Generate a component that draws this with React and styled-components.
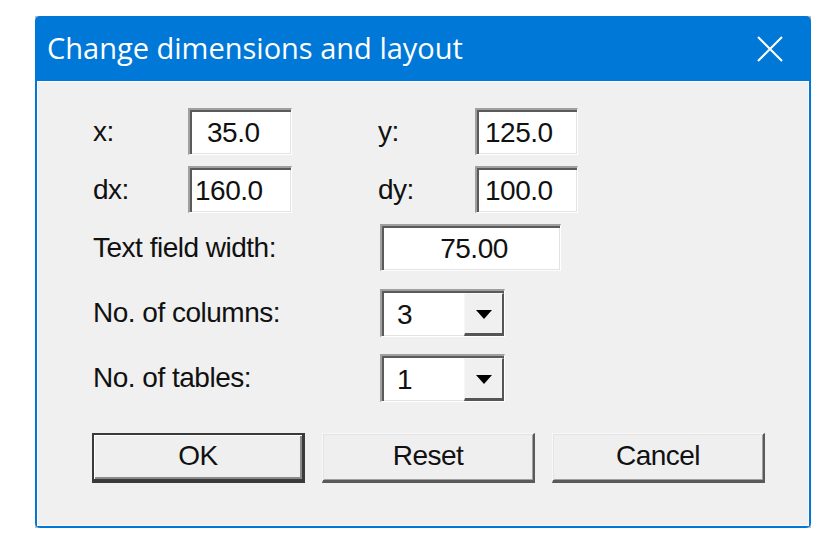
import React from "react";
import styled, { createGlobalStyle } from "styled-components";

const GlobalStyle = createGlobalStyle`
  html, body {
    margin: 0;
    padding: 0;
    background: #ffffff;
  }
`;

const Page = styled.div`
  width: 834px;
  height: 547px;
  padding: 16px 0 0 35px;
  box-sizing: border-box;
  background: #ffffff;
`;

const Frame = styled.div`
  width: 776px;
  height: 512px;
  background: #bdbdbd;
`;

const Window = styled.div`
  display: flex;
  flex-direction: column;
  width: 100%;
  height: 100%;
  box-sizing: border-box;
  padding: 0 2px 2px 2px;
  background: #0078d7;
  border-radius: 5px;
  overflow: hidden;
`;

const TitleBar = styled.div`
  display: flex;
  align-items: center;
  height: 65px;
  flex: 0 0 auto;
  padding-left: 10px;
`;

const Title = styled.div`
  flex: 1;
  color: #ffffff;
  font-family: "Segoe UI", "Open Sans", sans-serif;
  font-size: 29px;
  margin-top: -2px;
`;

const CloseButton = styled.div`
  display: flex;
  align-items: center;
  justify-content: center;
  width: 78px;
  height: 65px;
`;

const Body = styled.div`
  flex: 1;
  display: flex;
  flex-direction: column;
  background: #f0f0f0;
  box-shadow: inset 1px 1px 0 #ffffff, inset -1px -1px 0 #fbfbfb;
  padding: 27px 0 0 56px;
  font-family: "Liberation Sans", Arial, sans-serif;
  font-size: 28px;
  letter-spacing: -0.5px;
  color: #111111;
`;

const CoordRow = styled.div`
  display: grid;
  grid-template-columns: 95px 104px 86px 97px 104px;
  align-items: center;
  height: 47px;
  margin-bottom: ${(p) => p.$gap}px;
`;

const FieldRow = styled.div`
  display: grid;
  grid-template-columns: 287px auto;
  align-items: center;
  height: ${(p) => p.$height}px;
  margin-bottom: ${(p) => p.$gap}px;
`;

const Label = styled.div`
  white-space: nowrap;
`;

const Sunken = styled.div`
  position: relative;
  box-sizing: border-box;
  height: ${(p) => p.$height || 47}px;
  width: ${(p) => p.$width}px;
  background: #ffffff;
  border-style: solid;
  border-width: 2px 1px 1px 2px;
  border-color: #a0a0a0 #ffffff #ffffff #a0a0a0;
  box-shadow: inset 2px 2px 0 #5a5a5a, inset -1px -1px 0 #e3e3e3;
`;

const TextInput = styled.input`
  box-sizing: border-box;
  width: 100%;
  height: 100%;
  border: 0;
  outline: none;
  background: transparent;
  font-family: "Liberation Sans", Arial, sans-serif;
  font-size: 28px;
  letter-spacing: -0.5px;
  color: #111111;
  padding: 2px 0 0 ${(p) => p.$indent}px;
  text-align: ${(p) => (p.$center ? "center" : "left")};
`;

const Combo = styled(Sunken)`
  display: flex;
  align-items: stretch;
`;

const ComboValue = styled.div`
  flex: 1;
  display: flex;
  align-items: center;
  padding: 2px 0 0 15px;
`;

const DropButton = styled.div`
  display: flex;
  align-items: center;
  justify-content: center;
  width: 40px;
  margin: 2px 0 0 0;
  box-sizing: border-box;
  background: #f0f0f0;
  border-style: solid;
  border-width: 1px 2px 3px 1px;
  border-color: #f7f7f7 #555555 #555555 #f7f7f7;
`;

const Arrow = styled.span`
  width: 0;
  height: 0;
  border-left: 8px solid transparent;
  border-right: 8px solid transparent;
  border-top: 9px solid #000000;
  margin-top: 2px;
`;

const ButtonRow = styled.div`
  display: flex;
  gap: 17px;
  margin: 31px 0 0 -1px;
`;

const Button = styled.button`
  box-sizing: border-box;
  width: 213px;
  height: 50px;
  padding: 0 0 2px 0;
  background: #efefef;
  font-family: "Liberation Sans", Arial, sans-serif;
  font-size: 28px;
  letter-spacing: -0.5px;
  color: #111111;
  border-style: solid;
  border-width: ${(p) => (p.$default ? "2px 3px 4px 2px" : "1px 2px 3px 1px")};
  border-color: ${(p) =>
    p.$default ? "#3a3a3a" : "#f8f8f8 #5a5a5a #5a5a5a #f8f8f8"};
  box-shadow: ${(p) =>
    p.$default
      ? "inset 1px 1px 0 #ffffff, inset -2px -2px 0 #8a8a8a"
      : "inset 1px 1px 0 #e3e3e3, inset -1px -1px 0 #a0a0a0"};
`;

const CloseIcon = () => (
  <svg width="26" height="26" viewBox="0 0 26 26">
    <path d="M1 1 L25 25 M25 1 L1 25" stroke="#ffffff" strokeWidth="2" fill="none" />
  </svg>
);

const Field = ({ value, width, indent = 6, center }) => (
  <Sunken $width={width}>
    <TextInput readOnly value={value} $indent={indent} $center={center} />
  </Sunken>
);

const Select = ({ value }) => (
  <Combo $width={125} $height={48}>
    <ComboValue>{value}</ComboValue>
    <DropButton>
      <Arrow />
    </DropButton>
  </Combo>
);

export default function App() {
  return (
    <>
      <GlobalStyle />
      <Page>
        <Frame>
          <Window>
            <TitleBar>
              <Title>Change dimensions and layout</Title>
              <CloseButton>
                <CloseIcon />
              </CloseButton>
            </TitleBar>
            <Body>
              <CoordRow $gap={11}>
                <Label>x:</Label>
                <Field value="35.0" width={104} indent={17} />
                <span />
                <Label>y:</Label>
                <Field value="125.0" width={103} indent={8} />
              </CoordRow>
              <CoordRow $gap={11}>
                <Label>dx:</Label>
                <Field value="160.0" width={104} indent={5} />
                <span />
                <Label>dy:</Label>
                <Field value="100.0" width={103} indent={8} />
              </CoordRow>
              <FieldRow $height={47} $gap={18}>
                <Label>Text field width:</Label>
                <Field value="75.00" width={181} center />
              </FieldRow>
              <FieldRow $height={48} $gap={17}>
                <Label>No. of columns:</Label>
                <Select value="3" />
              </FieldRow>
              <FieldRow $height={48} $gap={0}>
                <Label>No. of tables:</Label>
                <Select value="1" />
              </FieldRow>
              <ButtonRow>
                <Button $default>OK</Button>
                <Button>Reset</Button>
                <Button>Cancel</Button>
              </ButtonRow>
            </Body>
          </Window>
        </Frame>
      </Page>
    </>
  );
}
